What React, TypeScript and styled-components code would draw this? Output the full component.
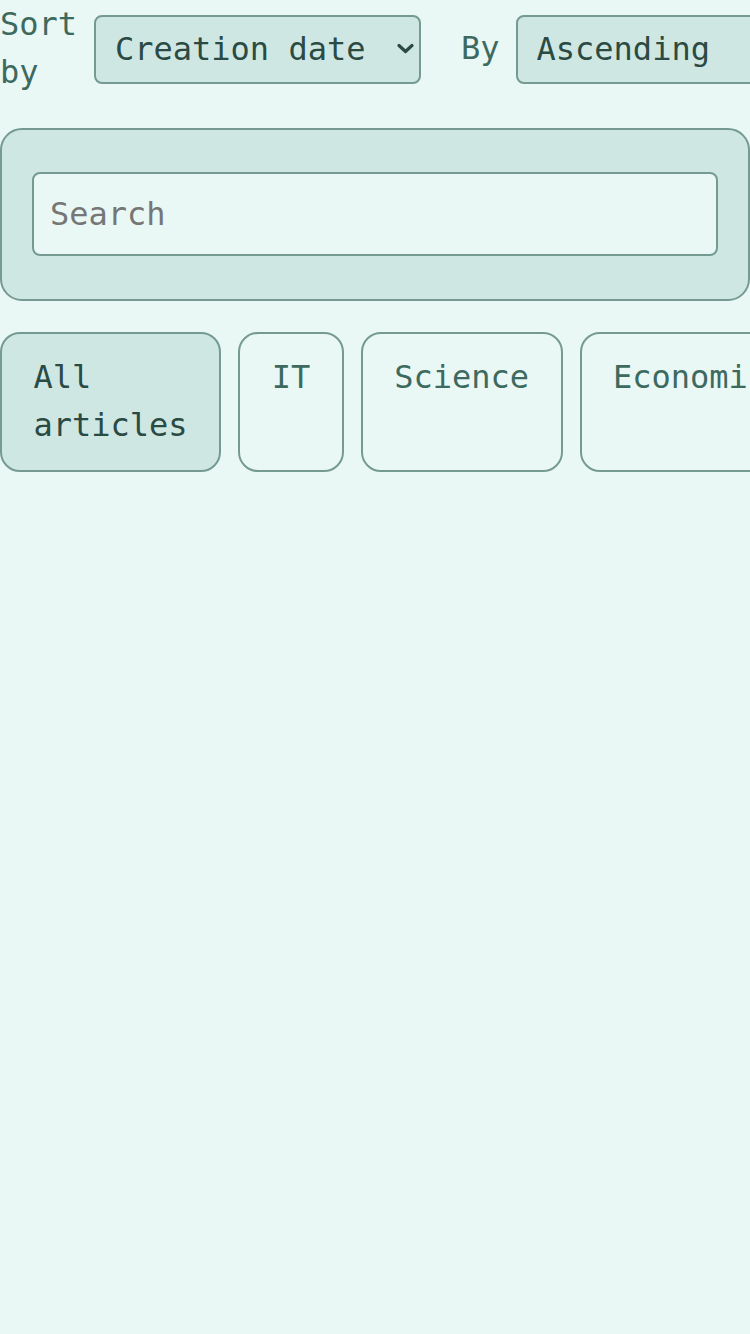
import styled, { createGlobalStyle } from "styled-components";

const GlobalStyle = createGlobalStyle`
  html, body {
    margin: 0;
    background: #eaf8f5;
    font-family: "DejaVu Sans Mono", monospace;
    font-size: 32px;
    line-height: 1.5;
    color: #3d6a5f;
    overflow: hidden;
  }
`;

const Page = styled.div`
  min-height: 1334px;
`;

const Toolbar = styled.div`
  display: flex;
  align-items: center;
  gap: 40px;
  margin-bottom: 32px;
`;

const Field = styled.label`
  display: flex;
  align-items: center;
  gap: 16px;
  flex-shrink: 0;
`;

const LabelText = styled.span<{ $narrow?: boolean }>`
  width: ${(p) => (p.$narrow ? "78px" : "auto")};
  color: #3d6a5f;
`;

const SelectWrap = styled.div<{ $width: number }>`
  position: relative;
  width: ${(p) => p.$width}px;
  flex-shrink: 0;
  margin-top: 2px;
`;

const Select = styled.select`
  appearance: none;
  box-sizing: border-box;
  display: block;
  width: 100%;
  font-family: "DejaVu Sans Mono", monospace;
  font-size: 32px;
  height: 69px;
  padding: 0 48px 0 19px;
  border: 2px solid #749a91;
  border-radius: 8px;
  background: #cfe7e3;
  color: #2a4a43;
  outline: none;
`;

const Chevron = styled.svg`
  position: absolute;
  right: 7px;
  top: 50%;
  margin-top: -6px;
  width: 17px;
  height: 11px;
  pointer-events: none;
`;

const SearchPanel = styled.div`
  box-sizing: border-box;
  width: 100%;
  padding: 42px 30px 43px;
  border: 2px solid #749a91;
  border-radius: 22px;
  background: #cfe7e3;
  margin-bottom: 31px;
`;

const SearchInput = styled.input`
  box-sizing: border-box;
  display: block;
  width: 100%;
  height: 84px;
  padding: 0 16px;
  border: 2px solid #749a91;
  border-radius: 8px;
  background: #eaf8f5;
  font-family: "DejaVu Sans Mono", monospace;
  font-size: 32px;
  color: #2a4a43;
  outline: none;

  &::placeholder {
    color: #767676;
  }
`;

const Tabs = styled.div`
  display: flex;
  gap: 17px;
`;

const Tab = styled.button<{ $active?: boolean }>`
  display: flex;
  align-items: flex-start;
  justify-content: center;
  text-align: left;
  height: 140px;
  padding: 19px 31.5px;
  border: 2px solid #749a91;
  border-radius: 20px;
  background: ${(p) => (p.$active ? "#cfe7e3" : "transparent")};
  color: ${(p) => (p.$active ? "#2a4a43" : "#3d6a5f")};
  font-family: "DejaVu Sans Mono", monospace;
  font-size: 32px;
  line-height: 1.5;
  cursor: pointer;
`;

const categories = ["All articles", "IT", "Science", "Economics"];

function ChevronIcon() {
  return (
    <Chevron viewBox="0 0 17 11" fill="none">
      <path
        d="M2 2.5 L8.5 8.5 L15 2.5"
        stroke="#2a4a43"
        strokeWidth="3.2"
        strokeLinecap="round"
        strokeLinejoin="round"
      />
    </Chevron>
  );
}

export default function App() {
  return (
    <Page>
      <GlobalStyle />
      <Toolbar>
        <Field>
          <LabelText $narrow>Sort by</LabelText>
          <SelectWrap $width={327}>
            <Select defaultValue="created">
              <option value="created">Creation date</option>
              <option value="title">Title</option>
              <option value="views">Views</option>
            </Select>
            <ChevronIcon />
          </SelectWrap>
        </Field>
        <Field>
          <LabelText>By</LabelText>
          <SelectWrap $width={300}>
            <Select defaultValue="asc">
              <option value="asc">Ascending</option>
              <option value="desc">Descending</option>
            </Select>
            <ChevronIcon />
          </SelectWrap>
        </Field>
      </Toolbar>
      <SearchPanel>
        <SearchInput placeholder="Search" />
      </SearchPanel>
      <Tabs>
        {categories.map((c, i) => (
          <Tab key={c} $active={i === 0}>
            {c}
          </Tab>
        ))}
      </Tabs>
    </Page>
  );
}
